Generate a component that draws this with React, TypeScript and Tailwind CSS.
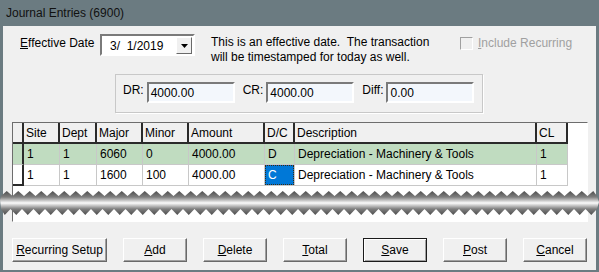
import React from "react";

const cols = [
  { label: "Site", w: "w-[36px]" },
  { label: "Dept", w: "w-[37px]" },
  { label: "Major", w: "w-[46px]" },
  { label: "Minor", w: "w-[46px]" },
  { label: "Amount", w: "w-[76px]" },
  { label: "D/C", w: "w-[30px]" },
  { label: "Description", w: "w-[242px]" },
  { label: "CL", w: "w-[31px]" },
];

const rows = [
  { cells: ["1", "1", "6060", "0", "4000.00", "D", "Depreciation - Machinery & Tools", "1"], current: false },
  { cells: ["1", "1", "1600", "100", "4000.00", "C", "Depreciation - Machinery & Tools", "1"], current: true },
];

const buttons = [
  { key: "R", rest: "ecurring Setup", w: "w-[95px]" },
  { key: "A", rest: "dd", w: "w-[64px]" },
  { key: "D", rest: "elete", w: "w-[64px]" },
  { key: "T", rest: "otal", w: "w-[64px]" },
  { key: "S", rest: "ave", w: "w-[64px]", isDefault: true },
  { key: "P", rest: "ost", w: "w-[64px]" },
  { key: "C", rest: "ancel", w: "w-[64px]" },
];

function Field({ label, value }: { label: string; value: string }) {
  return (
    <div className="flex items-start gap-[3px]">
      <span className="pt-[1px]">{label}</span>
      <div className="w-[88px] h-[21px] border-2 border-t-[#7a7a7a] border-l-[#7a7a7a] border-r-white border-b-white bg-[#f3f7fc] pl-[2px] pt-[2px]">
        {value}
      </div>
    </div>
  );
}

function Tear() {
  // zig-zag torn edge across the whole window
  const step = 11.5;
  let top = "M0 10 ";
  for (let x = 1; x < 597; x += step) {
    top += `L${x} 6 L${x + step / 2} 1 `;
  }
  top += "L597 6 L599 12 L597 19 ";
  let bottom = "";
  for (let x = 597; x > 1; x -= step) {
    bottom += `L${x} 19 L${x - step / 2} 25 `;
  }
  bottom += "L1 19 Z";
  return (
    <svg
      className="absolute left-0 top-[190px]"
      width="599"
      height="26"
      viewBox="0 0 599 26"
    >
      <defs>
        <linearGradient id="tg" x1="0" y1="0" x2="0" y2="1">
          <stop offset="0" stopColor="#4e4e4e" />
          <stop offset="0.25" stopColor="#7e7e7e" />
          <stop offset="0.5" stopColor="#fbfbfb" />
          <stop offset="0.75" stopColor="#7e7e7e" />
          <stop offset="1" stopColor="#4e4e4e" />
        </linearGradient>
      </defs>
      <path d={top + bottom} fill="url(#tg)" />
    </svg>
  );
}

export default function App() {
  return (
    <div className="relative w-[599px] h-[272px] bg-[#6b7b81] font-['Liberation_Sans',Arial,sans-serif] text-[12px] leading-[14px] text-black overflow-hidden">
      {/* Title bar */}
      <div className="h-[26px] flex items-center pl-[6px] text-[#111]">Journal Entries (6900)</div>

      <div className="mx-[3px] h-[244px] bg-[#f0f0f0] flex flex-col">
        {/* Effective date row */}
        <div className="flex items-start h-[22px] mt-[8px] pl-[17px]">
          <span className="w-[80px] pt-[2px]">
            <span className="underline">E</span>ffective Date
          </span>
          <div className="w-[95px] h-[22px] border-2 border-t-[#7a7a7a] border-l-[#7a7a7a] border-r-white border-b-white bg-white flex items-start">
            <span className="flex-1 pl-[8px] pt-[3px] whitespace-pre">3/  1/2019</span>
            <div className="w-[16px] h-[17px] mt-[1px] mr-[1px] bg-[#f0f0f0] border border-t-white border-l-white border-r-[#696969] border-b-[#696969] flex items-center justify-center">
              <svg width="7" height="4" viewBox="0 0 7 4">
                <path d="M0 0 H7 L3.5 4 Z" fill="#000" />
              </svg>
            </div>
          </div>
          <div className="w-[265px] pl-[16px] pt-[1px] leading-[15px] whitespace-pre">
            {"This is an effective date.  The transaction\nwill be timestamped for today as well."}
          </div>
          <div className="flex items-center gap-[5px] mt-[2px]">
            <div className="w-[13px] h-[13px] border border-t-[#a0a0a0] border-l-[#a0a0a0] border-r-white border-b-white" />
            <span className="text-[#a0a0a0]">
              <span className="underline">I</span>nclude Recurring
            </span>
          </div>
        </div>

        {/* Totals group */}
        <div className="ml-[112px] mt-[18px] w-[368px] h-[39px] border border-[#c8c8c8] shadow-[1px_1px_0_#fff] flex items-start gap-[8px] pl-[7px] pt-[7px]">
          <Field label="DR:" value="4000.00" />
          <Field label="CR:" value="4000.00" />
          <Field label="Diff:" value="0.00" />
        </div>

        {/* Grid */}
        <div className="ml-[9px] mt-[9px] w-[576px] h-[100px] border border-t-[#6d6d6d] border-l-[#6d6d6d] border-r-white border-b-white bg-white flex flex-col">
          <div className="flex h-[21px] bg-[#f0f0f0]">
            <div className="w-[11px] border-r-2 border-b-2 border-[#2a2a2a]" />
            {cols.map((c) => (
              <div
                key={c.label}
                className={`${c.w} border-r-2 border-b-2 border-[#2a2a2a] pl-[2px] pt-[3px]`}
              >
                {c.label}
              </div>
            ))}
            <div className="flex-1 bg-white" />
          </div>
          {rows.map((r, i) => (
            <div key={i} className="flex h-[21px]">
              <div
                className={
                  r.current
                    ? "w-[11px] bg-white border-r-2 border-b-2 border-[#2a2a2a]"
                    : "w-[11px] bg-[#c0dcc0] border-r-2 border-r-[#2a2a2a] border-b border-b-[#c8c8c8]"
                }
              />
              {r.cells.map((v, j) => {
                const selected = r.current && j === 5;
                return (
                  <div
                    key={j}
                    className={`${cols[j].w} h-[21px] border-r border-b border-[#c8c8c8] ${
                      r.current ? "bg-white" : "bg-[#c0dcc0]"
                    }`}
                  >
                    {selected ? (
                      <div className="h-[20px] bg-[#0078d7] text-white border border-dotted border-[#3a2a10] pl-[2px] pt-[2px]">
                        {v}
                      </div>
                    ) : (
                      <div className="pl-[3px] pt-[3px]">{v}</div>
                    )}
                  </div>
                );
              })}
              <div className="flex-1 bg-white" />
            </div>
          ))}
        </div>

        {/* Buttons */}
        <div className="flex gap-[16px] ml-[9px] mt-[16px]">
          {buttons.map((b) => (
            <div
              key={b.key}
              className={`${b.w} h-[24px] flex items-center justify-center bg-[#f0f0f0] ${
                b.isDefault
                  ? "border border-[#1a1a1a] shadow-[inset_1px_1px_0_#fff,inset_-1px_-1px_0_#a0a0a0]"
                  : "border border-t-white border-l-white border-r-[#696969] border-b-[#696969] shadow-[inset_-1px_-1px_0_#a0a0a0]"
              }`}
            >
              <span>
                <span className="underline">{b.key}</span>
                {b.rest}
              </span>
            </div>
          ))}
        </div>
      </div>

      <Tear />
    </div>
  );
}
